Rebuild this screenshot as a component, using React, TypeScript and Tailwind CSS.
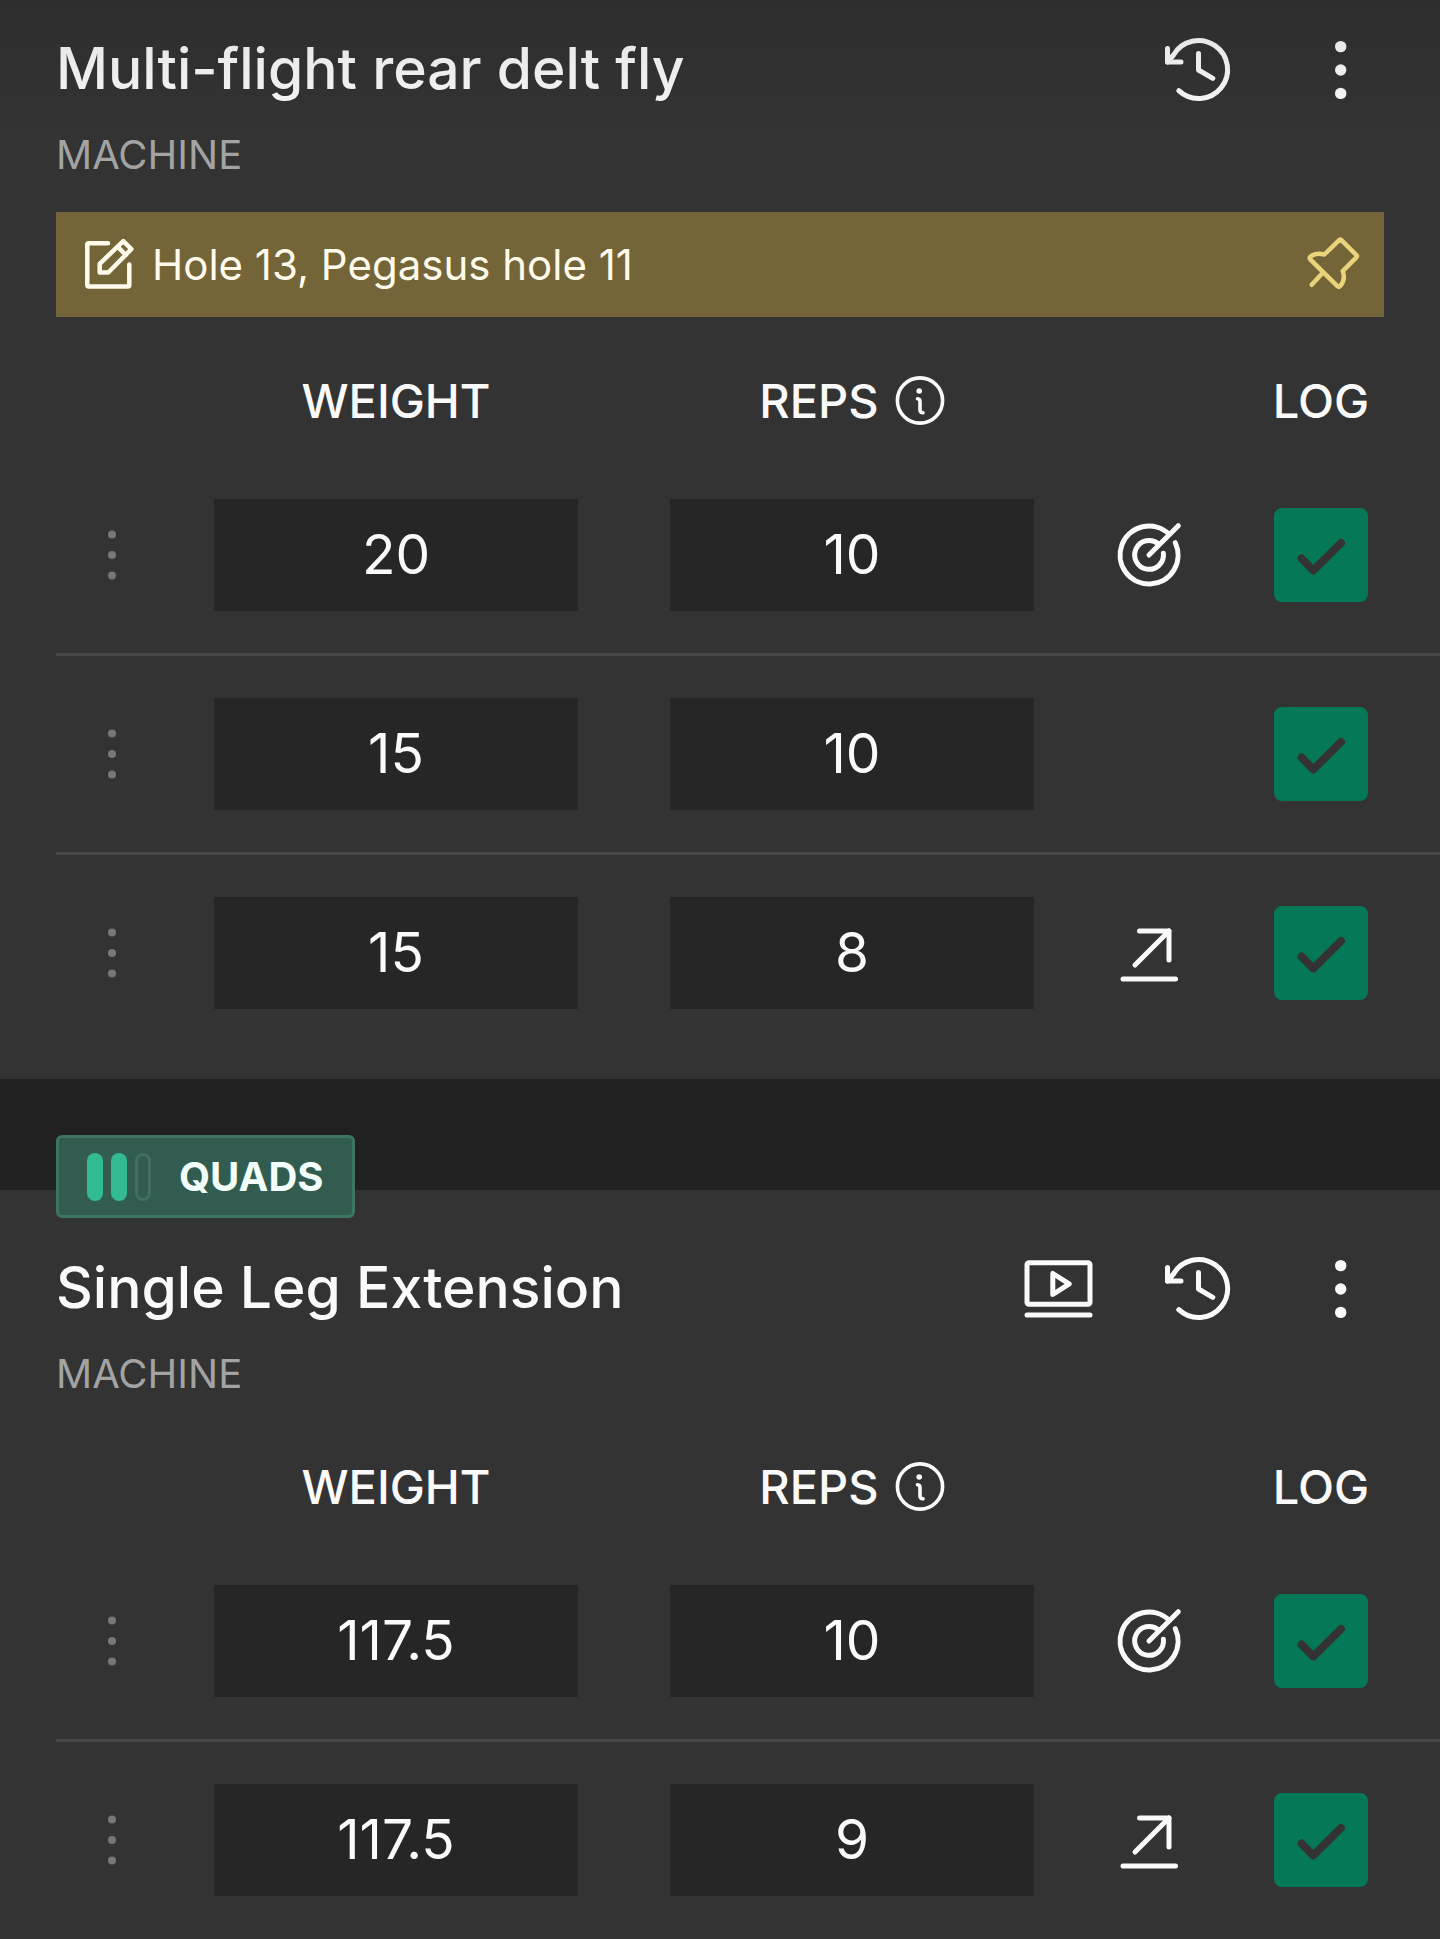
import type { ReactNode } from "react";

type SetMark = "target" | "progress";

type WorkoutSet = {
  weight: string;
  reps: string;
  mark?: SetMark;
};

type Exercise = {
  name: string;
  equipment: string;
  note?: string;
  muscle?: string;
  hasVideo?: boolean;
  sets: WorkoutSet[];
};

const exercises: Exercise[] = [
  {
    name: "Multi-flight rear delt fly",
    equipment: "MACHINE",
    note: "Hole 13, Pegasus hole 11",
    sets: [
      { weight: "20", reps: "10", mark: "target" },
      { weight: "15", reps: "10" },
      { weight: "15", reps: "8", mark: "progress" },
    ],
  },
  {
    name: "Single Leg Extension",
    equipment: "MACHINE",
    muscle: "QUADS",
    hasVideo: true,
    sets: [
      { weight: "117.5", reps: "10", mark: "target" },
      { weight: "117.5", reps: "9", mark: "progress" },
    ],
  },
];

type LineIconProps = {
  viewBox?: string;
  strokeWidth?: number;
  className: string;
  children: ReactNode;
};

const LineIcon = ({
  viewBox = "0 0 72 72",
  strokeWidth = 5,
  className,
  children,
}: LineIconProps) => (
  <svg
    viewBox={viewBox}
    fill="none"
    stroke="currentColor"
    strokeWidth={strokeWidth}
    strokeLinecap="round"
    strokeLinejoin="round"
    aria-hidden="true"
    className={className}
  >
    {children}
  </svg>
);

const HistoryIcon = () => (
  <LineIcon className="size-[72px]">
    <path d="M15.8 56.7A29 29 0 1 0 10.5 21L4.5 28" />
    <path d="M4.5 14.5V28H18" />
    <path d="M35.5 19.5V36L49.8 44.3" />
  </LineIcon>
);

const VideoIcon = () => (
  <LineIcon className="size-[72px]">
    <rect x="5" y="9.7" width="63" height="41.6" rx="2" />
    <path d="M30.8 20.5V41.5L47.2 30.8Z" />
    <path d="M5 62H68" />
  </LineIcon>
);

const MoreIcon = () => (
  <svg
    viewBox="0 0 24 72"
    fill="currentColor"
    aria-hidden="true"
    className="h-[72px] w-6"
  >
    <circle cx="12.7" cy="12.6" r="5.7" />
    <circle cx="12.7" cy="36" r="5.7" />
    <circle cx="12.7" cy="59.4" r="5.7" />
  </svg>
);

const DragIcon = () => (
  <svg
    viewBox="0 0 16 56"
    fill="currentColor"
    aria-hidden="true"
    className="h-14 w-4"
  >
    <circle cx="8" cy="7.5" r="4" />
    <circle cx="8" cy="28" r="4" />
    <circle cx="8" cy="48.5" r="4" />
  </svg>
);

const EditIcon = () => (
  <LineIcon viewBox="0 0 56 56" strokeWidth={4.5} className="size-14 shrink-0">
    <path d="M28 6.2H8.8Q7.3 6.2 7.3 7.7V48Q7.3 49.5 8.8 49.5H47.8Q49.3 49.5 49.3 48V27.5" />
    <path d="M43.3 4.2L51.3 12.2L28.3 35.5H19.7V26.8Z" />
    <path d="M37.7 9.8L45.7 17.8" />
  </LineIcon>
);

const PinIcon = () => (
  <LineIcon viewBox="0 0 56 56" strokeWidth={4.5} className="size-14">
    <path d="M35.2 3.1Q36.3 2 37.4 3.1L52.4 18.1Q53.5 19.2 52.4 20.3L38.7 34.2Q41.8 42.5 36.4 48.9Q35 50.5 33.4 49.1L6.2 22.3Q5 20.9 6.6 19.5Q12.5 15.1 20.3 17.5Z" />
    <path d="M19 35.5L7.7 47.8" />
  </LineIcon>
);

const InfoIcon = () => (
  <LineIcon viewBox="0 0 50 50" strokeWidth={3.6} className="size-[50px]">
    <circle cx="25" cy="25.5" r="22.6" />
    <path d="M22.5 23.7Q25 23.9 25 26.5V35Q25 37.5 28 37.8" />
    <circle cx="24.2" cy="16" r="2.8" fill="currentColor" stroke="none" />
  </LineIcon>
);

const TargetIcon = () => (
  <LineIcon className="mx-auto size-[72px]">
    <path d="M62.3 23.7A29 29 0 1 1 56 15" />
    <path d="M50.4 34.3A14.4 14.4 0 1 1 45.5 25" />
    <path d="M36 36L65.3 6.7" />
  </LineIcon>
);

const ProgressIcon = () => (
  <LineIcon className="mx-auto size-[72px]">
    <path d="M26.5 14H56V43" />
    <path d="M56 14L22 48" />
    <path d="M10 62H62.5" />
  </LineIcon>
);

const IconButton = ({
  label,
  children,
}: {
  label: string;
  children: ReactNode;
}) => (
  <button
    type="button"
    aria-label={label}
    className="flex h-20 w-[88px] items-center justify-center"
  >
    {children}
  </button>
);

const MuscleBadge = ({ name }: { name: string }) => (
  <div className="absolute -top-[55px] left-14 flex h-[83px] items-center gap-7 rounded-md border-[3px] border-[#3c7560] bg-[#325c50] px-7">
    <div className="flex gap-2">
      <span className="h-12 w-4 rounded-full bg-[#32bb92]" />
      <span className="h-12 w-4 rounded-full bg-[#32bb92]" />
      <span className="h-12 w-4 rounded-full border-[3px] border-[#426f61]" />
    </div>
    <span className="text-[40px] font-bold text-[#f3fffb]">{name}</span>
  </div>
);

const NoteBar = ({ note }: { note: string }) => (
  <div className="mt-7 mr-14 flex h-[105px] items-center gap-4 bg-[#736537] px-6 text-[#fffaeb]">
    <EditIcon />
    <p className="flex-1 text-[42px]">{note}</p>
    <button type="button" aria-label="Pin note" className="text-[#e9d37b]">
      <PinIcon />
    </button>
  </div>
);

const ValueInput = ({ label, value }: { label: string; value: string }) => (
  <input
    type="text"
    inputMode="decimal"
    aria-label={label}
    defaultValue={value}
    className="block h-28 w-full bg-[#262626] pb-0.5 text-center text-[55px] outline-none"
  />
);

const LogCheckbox = ({ label }: { label: string }) => (
  <label className="mx-auto grid size-[94px]">
    <input
      type="checkbox"
      aria-label={label}
      defaultChecked
      className="peer col-start-1 row-start-1 size-[94px] appearance-none rounded-lg border-[3px] border-[#047857] checked:bg-[#047857]"
    />
    <LineIcon
      viewBox="0 0 94 94"
      strokeWidth={8}
      className="pointer-events-none col-start-1 row-start-1 size-[94px] text-[#333333] opacity-0 peer-checked:opacity-100"
    >
      <path d="M27.5 50.5L39.3 62.5L67 35" />
    </LineIcon>
  </label>
);

const SetTable = ({ sets }: { sets: WorkoutSet[] }) => (
  <table className="mt-[26px] w-full table-fixed border-separate border-spacing-0">
    <thead>
      <tr className="h-[114px] text-[47px] leading-none">
        <th className="w-28" aria-label="Reorder" />
        <th className="font-medium">WEIGHT</th>
        <th className="font-medium">
          <span className="flex items-center justify-center gap-4">
            REPS
            <button type="button" aria-label="About reps">
              <InfoIcon />
            </button>
          </span>
        </th>
        <th className="w-[138px]" aria-label="Progress" />
        <th className="w-[222px] pr-4 font-medium">LOG</th>
      </tr>
    </thead>
    <tbody className="[&>tr+tr>td]:border-t-[3px]">
      {sets.map((set, i) => (
        <tr key={i} className="[&>td]:border-[#474747] [&>td]:py-[42px]">
          <td>
            <button
              type="button"
              aria-label={`Reorder set ${i + 1}`}
              className="mx-auto block text-[#777777]"
            >
              <DragIcon />
            </button>
          </td>
          <td className="px-[46px]">
            <ValueInput label={`Set ${i + 1} weight`} value={set.weight} />
          </td>
          <td className="px-[46px]">
            <ValueInput label={`Set ${i + 1} reps`} value={set.reps} />
          </td>
          <td>
            {set.mark === "target" && <TargetIcon />}
            {set.mark === "progress" && <ProgressIcon />}
          </td>
          <td className="pr-4">
            <LogCheckbox label={`Log set ${i + 1}`} />
          </td>
        </tr>
      ))}
    </tbody>
  </table>
);

const ExerciseCard = ({ exercise }: { exercise: Exercise }) => (
  <section className="relative bg-[#333333] pt-[30px] pb-7 pl-14 last:grow last:pt-[59px] last:pb-0">
    {exercise.muscle && <MuscleBadge name={exercise.muscle} />}
    <header className="flex h-20 items-center justify-between pr-14">
      <h2 className="pb-1 text-[57px] leading-none font-medium">
        {exercise.name}
      </h2>
      <div className="flex gap-[53px]">
        {exercise.hasVideo && (
          <IconButton label="Watch video">
            <VideoIcon />
          </IconButton>
        )}
        <IconButton label="History">
          <HistoryIcon />
        </IconButton>
        <IconButton label="More options">
          <MoreIcon />
        </IconButton>
      </div>
    </header>
    <p className="mt-4 text-[40px] leading-[58px] text-[#a3a3a3]">
      {exercise.equipment}
    </p>
    {exercise.note && <NoteBar note={exercise.note} />}
    <SetTable sets={exercise.sets} />
  </section>
);

export default function App() {
  return (
    <main className="relative flex min-h-screen flex-col gap-[111px] bg-[#212121] font-['Inter',sans-serif] text-[#fafafa]">
      <div className="pointer-events-none absolute inset-x-0 top-0 z-10 h-36 bg-linear-to-b from-black/10 to-transparent" />
      {exercises.map((exercise) => (
        <ExerciseCard key={exercise.name} exercise={exercise} />
      ))}
    </main>
  );
}
